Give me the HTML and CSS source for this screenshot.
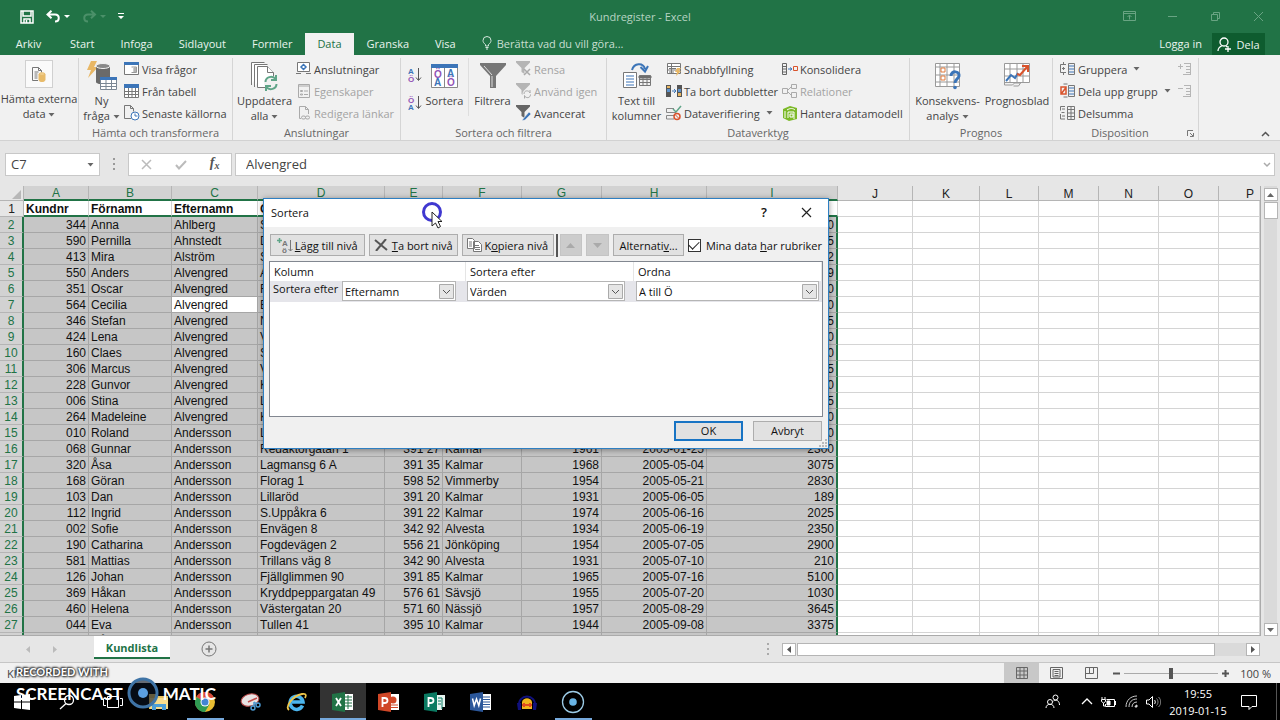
FILE: index.html
```html
<!DOCTYPE html>
<html lang="sv">
<head>
<meta charset="utf-8">
<title>Kundregister - Excel</title>
<link rel="stylesheet" href="styles.css">
</head>
<body>
<svg class="defs" width="0" height="0" aria-hidden="true">
  <symbol id="caret" viewBox="0 0 7 4"><path d="M0.5 0h6L3.500 3.500z" fill="#666"/></symbol>
  <symbol id="funnel" viewBox="0 0 16 16"><path d="M0 0h14v1.500L8.500 7v6L5.500 11V7L0 1.500z" fill="currentColor"/></symbol>
</svg>

<header class="top">
  <div class="titlebar">
    <div class="quick">
      <button aria-label="Spara"><svg width="14" height="14" viewBox="0 0 14 14" fill="none" stroke="#fff" stroke-width="1.500"><path d="M1 1h12v12H1zM3 1v5h8V1M4 13V9h6v4M6.500 10v3"/></svg></button>
      <button class="undo" aria-label="Ångra"><svg width="15" height="13" viewBox="0 0 15 13" fill="none" stroke="#fff" stroke-width="2"><path d="M1.500 4.500h7.500c5 0 5 7 0 7M5.500 .8L1.500 4.500l4 3.700"/></svg><svg width="6" height="4" viewBox="0 0 6 4"><path d="M0 0h6L3 3z" fill="#fff"/></svg></button>
      <button class="undo" aria-label="Gör om"><svg width="15" height="13" viewBox="0 0 15 13" fill="none" stroke="#4b9069" stroke-width="2"><path d="M13 4.500H6c-5 0-5 7 0 7M9 .8l4 3.700-4 3.700"/></svg><svg width="6" height="4" viewBox="0 0 6 4"><path d="M0 0h6L3 3z" fill="#4b9069"/></svg></button>
      <button aria-label="Anpassa verktygsfältet"><svg width="6" height="7" viewBox="0 0 6 7"><path d="M0 0h6v1H0zM0 3h6L3 6z" fill="#fff"/></svg></button>
    </div>
    <div class="doc-title">Kundregister - Excel</div>
    <div class="winctl">
      <button aria-label="Menyfliksalternativ"><svg width="13" height="11" viewBox="0 0 13 11" fill="none" stroke="#69a483"><path d="M.5.5h12v9H.5zM.5 2.500h12M6.500 8.500v-4M4.500 6l2-2 2 2"/></svg></button>
      <button aria-label="Minimera"><svg width="11" height="11" viewBox="0 0 11 11" stroke="#69a483"><path d="M1 5.500h9"/></svg></button>
      <button aria-label="Återställ"><svg width="11" height="11" viewBox="0 0 11 11" fill="none" stroke="#69a483"><path d="M1.500 3.500h6v6h-6zM3.500 3.500v-2h6v6h-2"/></svg></button>
      <button aria-label="Stäng"><svg width="11" height="11" viewBox="0 0 11 11" stroke="#69a483"><path d="M1 1l9 9M10 1l-9 9"/></svg></button>
    </div>
  </div>
  <nav class="tabs">
    <button class="file">Arkiv</button><button>Start</button><button>Infoga</button><button>Sidlayout</button><button>Formler</button><button class="active">Data</button><button>Granska</button><button>Visa</button>
    <button class="tell"><svg width="10" height="14" viewBox="0 0 10 14" fill="none" stroke="#d4e6dc"><path d="M3.500 10V8.500C2 7.500 1 6 1 4.500a4 4 0 018 0C9 6 8 7.500 6.500 8.500V10zM3.500 11.500h3M4 13h2"/></svg>Berätta vad du vill göra...</button>
    <span class="grow"></span>
    <button class="login">Logga in</button>
    <button class="share"><svg width="15" height="15" viewBox="0 0 15 15" fill="none" stroke="#fff" stroke-width="1.300"><circle cx="7" cy="5" r="4"/><path d="M1 14c0-3 2-4.500 4.500-5.500M9 9l1 1M11 9v6M8 12h6"/></svg>Dela</button>
  </nav>
</header>

<section class="ribbon">
  <div class="group g-ext">
    <div class="tools">
      <button class="big"><span class="pic boxed"><svg width="16" height="17" viewBox="0 0 16 17" fill="none" stroke="#777"><path d="M7 14.500H1.500V1.500h6L10.500 4.500v2M7.500 1.500v3h3M3.500 6h4M3.500 8h3M3.500 10h3M3.500 12h3"/><path d="M8 8v6c0 2 6 2 6 0V8" fill="#e8bb6a" stroke="#e8bb6a"/><ellipse cx="11" cy="8" rx="3" ry="1.200" fill="#f4d79c" stroke="#e8bb6a"/></svg></span>Hämta externa<span>data <svg class="car"><use href="#caret"/></svg></span></button>
    </div>
  </div>
  <div class="group g-trans">
    <div class="tools">
      <button class="big"><span class="pic"><svg width="32" height="32" viewBox="0 0 32 32"><path d="M5 1h6L8 7h4L2 18 5 10H1z" fill="#e8b765"/><path d="M10 6v16c0 3 14 3 14 0V6z" fill="#6a6a6a"/><ellipse cx="17" cy="6" rx="7" ry="2.500" fill="#888" stroke="#f1f1f1"/><path d="M14.500 17.500h16v12h-16z" fill="#fff" stroke="#7b8794"/><path d="M14 17h17v3H14z" fill="#3c75b8"/><path d="M14 23.500h17M14 26.500h17M20 20v10M25.500 20v10" stroke="#7b8794"/></svg></span>Ny<span>fråga <svg class="car"><use href="#caret"/></svg></span></button>
      <div class="col">
        <button class="small"><svg width="16" height="16" viewBox="0 0 16 16" fill="#fff" stroke="#777"><path d="M.5 1.500h14v12H.5z"/><path d="M0 1h15v3H0z" fill="#3c75b8" stroke="none"/><path d="M7.500 6h5v5.500h-5M9 8h3M9 10h3M11 6v6" stroke="#999"/></svg>Visa frågor</button>
        <button class="small"><svg width="16" height="16" viewBox="0 0 16 16" fill="#fff" stroke="#777"><path d="M.5 1.500h14v13H.5z"/><path d="M0 1h15v4H0z" fill="#3c75b8" stroke="none"/><path d="M.5 8.500h14M.5 11.500h14M4.500 5v9.500M8 5v9.500M11.500 5v9.500"/></svg>Från tabell</button>
        <button class="small"><svg width="16" height="16" viewBox="0 0 16 16" fill="none" stroke="#777"><path d="M7 13.500H.5V.5h6l3 3v3M6.500.5v3h3"/><circle cx="11" cy="11" r="4" fill="#fff" stroke="#3c75b8"/><path d="M11 8.500V11h2.500" stroke="#3c75b8"/></svg>Senaste källorna</button>
      </div>
    </div>
    <h2>Hämta och transformera</h2>
  </div>
  <div class="group g-conn">
    <div class="tools">
      <button class="big"><span class="pic"><svg width="30" height="30" viewBox="0 0 30 30" fill="#fff" stroke="#777"><path d="M1.500 24V1.500h13M4.500 26V3.500h13"/><path d="M7.500 5.500h10l6 6v15h-16z"/><path d="M17.500 5.500v6h6"/><circle cx="21" cy="22" r="7" fill="#f1f1f1" stroke="none"/><path d="M15.500 21c0-5 7-7 10-3M26.500 23c0 5-7 7-10 3M26 14v5h-5M16 30v-5h5" fill="none" stroke="#5fa588" stroke-width="2"/></svg></span>Uppdatera<span>alla <svg class="car"><use href="#caret"/></svg></span></button>
      <div class="col">
        <button class="small"><svg width="16" height="16" viewBox="0 0 16 16" fill="#fff" stroke="#777"><path d="M1.500 1.500h12v9h-12zM0 12.500h5M10 12.500h5"/><path d="M7.500 3.500L10 6l-2.500 2.500L5 6z" stroke="#3c75b8" stroke-width="1.500"/></svg>Anslutningar</button>
        <button class="small off"><svg width="16" height="16" viewBox="0 0 16 16" fill="none" stroke="#aaa"><path d="M2.500 1.500h11v13h-11zM2.500 3h11M4.500 7.500h2v1h-2zM8 8h4M4.500 11h2v1h-2zM8 11.500h4"/></svg>Egenskaper</button>
        <button class="small off"><svg width="16" height="16" viewBox="0 0 16 16" fill="none" stroke="#aaa"><path d="M5 13.500H3.500V1.500h6l3 3V9M9.500 1.500v3h3"/><rect x="5.500" y="11" width="4" height="3" rx="1.500"/><rect x="9.500" y="11" width="4" height="3" rx="1.500"/></svg>Redigera länkar</button>
      </div>
    </div>
    <h2>Anslutningar</h2>
  </div>
  <div class="group g-sort">
    <div class="tools">
      <div class="az">
        <button aria-label="Sortera stigande"><svg width="14" height="16" viewBox="0 0 14 16"><text x="0" y="7" class="gl blue">A</text><text x="0" y="15" class="gl purple">Ö</text><path d="M10.500 1v12M8 10.500l2.500 3 2.500-3" fill="none" stroke="#555"/></svg></button>
        <button aria-label="Sortera fallande"><svg width="14" height="16" viewBox="0 0 14 16"><text x="0" y="8" class="gl purple">Ö</text><text x="0" y="15" class="gl blue">A</text><path d="M10.500 1v12M8 10.500l2.500 3 2.500-3" fill="none" stroke="#555"/></svg></button>
      </div>
      <button class="big"><span class="pic"><svg width="28" height="26" viewBox="0 0 28 26"><path d="M.5 1.500h26v23H.5z" fill="#fff" stroke="#888"/><path d="M0 1h27v4H0z" fill="#3c75b8"/><path d="M13.500 5v19" stroke="#888"/><text x="3" y="15" class="gm purple">Ö</text><text x="3" y="23" class="gm blue">A</text><text x="16" y="14" class="gm blue">A</text><text x="16" y="23" class="gm purple">Ö</text></svg></span>Sortera</button>
      <span class="vr"></span>
      <button class="big"><span class="pic"><svg width="28" height="28" viewBox="0 0 28 28"><path d="M1 1h26v2L17 14v12h-6V14L1 3z" fill="#777"/><path d="M13 14v11M5 4l8 9" stroke="#ddd" fill="none"/></svg></span>Filtrera</button>
      <div class="col">
        <button class="small off"><svg width="16" height="16" viewBox="0 0 16 16" color="#b5b5b5"><use href="#funnel"/><path d="M8 8l6 6M14 8l-6 6" stroke="#aaa" stroke-width="1.500"/></svg>Rensa</button>
        <button class="small off"><svg width="16" height="16" viewBox="0 0 16 16" color="#b5b5b5"><use href="#funnel"/><circle cx="11" cy="11" r="4.500" fill="#f1f1f1"/><path d="M8 11c0-4 5-4 6-1V7M14.500 11.500c0 4-5 4-6 1v3" fill="none" stroke="#aaa"/></svg>Använd igen</button>
        <button class="small"><svg width="16" height="16" viewBox="0 0 16 16" color="#666"><use href="#funnel"/><path d="M7 14l6-7 2 2-6 6-3 .5z" fill="#3c75b8" stroke="#f1f1f1" stroke-width=".5"/></svg>Avancerat</button>
      </div>
    </div>
    <h2>Sortera och filtrera</h2>
  </div>
  <div class="group g-data">
    <div class="tools">
      <button class="big"><span class="pic"><svg width="30" height="27" viewBox="0 0 30 27" fill="none" stroke="#777"><path d="M1.500 10.500h13v15h-13z" fill="#fff"/><path d="M4 14h8M4 17h8M4 20h8M4 23h8" stroke="#3c75b8"/><path d="M17.500 13.500h11v10h-11zM17 17.500h12M17 20.500h12M21 16v8M25 16v8"/><path d="M17 14h12v2H17z" fill="#666"/><path d="M10 8c2-7 11-8 13-1M18.500 5l4.500 4.500L26 4" stroke="#3c75b8" stroke-width="2"/></svg></span>Text till<span>kolumner</span></button>
      <div class="col first">
        <button class="small"><svg width="16" height="16" viewBox="0 0 16 16" fill="#fff" stroke="#777"><path d="M1.500 2.500h13v10h-13zM2 5.500h12M2 9h12M5.500 3v9M3 7.500h7M3 11h5"/><path d="M11 7h4l-2 3h2l-5 5 1-4H9z" fill="#e8b765" stroke="none"/></svg>Snabbfyllning</button>
        <button class="small"><svg width="16" height="16" viewBox="0 0 16 16"><path d="M0 2h5v12H0zM11 2h5v12h-5z" fill="#555"/><path d="M1 6h3v3H1zM12 6h3v3h-3z" fill="#5d93cc"/><path d="M1 3h3v2H1zM12 10h3v3h-3z" fill="#e8b765"/><path d="M6 8h4M8 6l2 2-2 2" stroke="#3c75b8" fill="none"/></svg>Ta bort dubbletter</button>
        <button class="small"><svg width="16" height="16" viewBox="0 0 16 16" fill="none" stroke="#888"><path d="M8 3.500H.5v4H10M8 10.500H.5v3.500H8"/><path d="M7 4l3 3 5-6" stroke="#5fa588" stroke-width="1.500"/><circle cx="11" cy="11.500" r="3" stroke="#d9532c" stroke-width="1.500"/><path d="M9 9.500l4 4" stroke="#d9532c"/></svg>Dataverifiering<svg class="car end"><use href="#caret"/></svg></button>
      </div>
      <div class="col">
        <button class="small"><svg width="16" height="16" viewBox="0 0 16 16" fill="none" stroke="#666"><path d="M.5 2.500h4v11h-4zM.5 5.500h4M.5 8h4M.5 11h4"/><path d="M6 8h4M8 6.500L10 8 8 9.500" stroke="#3c75b8"/><path d="M11.500 5.500h4v4h-4z" stroke="#d9532c"/></svg>Konsolidera</button>
        <button class="small off"><svg width="16" height="16" viewBox="0 0 16 16" fill="none" stroke="#aaa"><path d="M.5 5.500h5v5h-5zM9.500 1.500h5v4h-5zM9.500 9.500h5v5h-5zM6 7l3-3M6 9l3 3"/></svg>Relationer</button>
        <button class="small"><svg width="16" height="16" viewBox="0 0 16 16"><path d="M1 4l7-3 7 2v11l-8 2-6-3z" fill="#7cb928"/><path d="M3 6v7M5 5c3-2 6-2 8 0M6 7h6v7M6 7v6M8 9h3v3H8z" stroke="#fff" fill="none"/></svg>Hantera datamodell</button>
      </div>
    </div>
    <h2>Dataverktyg</h2>
  </div>
  <div class="group g-prog">
    <div class="tools">
      <button class="big"><span class="pic"><svg width="28" height="28" viewBox="0 0 28 28" fill="none" stroke="#999"><path d="M1.500 1.500h24v23h-24z" fill="#fff"/><path d="M1 5h24M1 13h24M1 20h24M6 1v23M13 1v23M20 1v23"/><path d="M7 6h4v4H7zM7 14h4v4H7z" fill="#fff" stroke="#e07a3c"/><path d="M17 14c0-6 9-5 8 0-.5 3-4 3-4 7" stroke="#3c75b8" stroke-width="3"/><circle cx="21" cy="25.500" r="1.800" fill="#3c75b8" stroke="none"/></svg></span>Konsekvens-<span>analys <svg class="car"><use href="#caret"/></svg></span></button>
      <button class="big"><span class="pic"><svg width="28" height="28" viewBox="0 0 28 28" fill="none" stroke="#999"><path d="M1.500 1.500h25v19h-25z" fill="#fff"/><path d="M1 7h25M1 14h25M7 1v19M14 1v19M20 1v19M1.500 20v3h8l2-2h6l-2 3h-5"/><path d="M3 19l5-6 4 3 3-5" stroke="#3c75b8" stroke-width="2"/><path d="M14 12l3 1 7-8M19 4h6v6" stroke="#d9532c" stroke-width="2"/></svg></span>Prognosblad</button>
    </div>
    <h2>Prognos</h2>
  </div>
  <div class="group g-disp">
    <div class="tools">
      <div class="col">
        <button class="small"><svg width="16" height="16" viewBox="0 0 16 16" fill="none" stroke="#777"><path d="M6 3.500H.5v8H6M3.500 1v2M3.500 12v2M2 7.500h3M3.500 6v3M8.500 2.500h6v11h-6z"/><path d="M9 5h5M9 8h5M9 11h5" stroke="#3c75b8"/></svg>Gruppera<svg class="car end"><use href="#caret"/></svg></button>
        <button class="small"><svg width="16" height="16" viewBox="0 0 16 16" fill="none" stroke="#777"><path d="M8.500 2.500h6v11h-6zM3.500 1h4M3.500 14h4"/><path d="M9 5h5M9 8h5M9 11h5" stroke="#3c75b8"/><path d="M1 4h5v7H1zM1.500 10.500L6 4.500" stroke="#d9532c" stroke-width="1.500"/></svg>Dela upp grupp<svg class="car end"><use href="#caret"/></svg></button>
        <button class="small"><svg width="16" height="16" viewBox="0 0 16 16" fill="none" stroke="#777"><path d="M5 1.500H.5v4M.5 9v5H5M1.500 7.500h3M2 4h3M2 11h3M7.500 1.500h7v13h-7zM7.500 4.500h7M7.500 8h7M7.500 11.500h7M11 1.500v13"/></svg>Delsumma</button>
      </div>
      <div class="col mini">
        <button class="small" aria-label="Visa detalj"><svg width="14" height="14" viewBox="0 0 14 14" stroke="#b5b5b5"><path d="M0 4.500h5M2.500 2v5M6 1.500h7M8 4.500h5M8 7.500h5M8 10.500h5M5 12.500h8M12.500 1v12"/></svg></button>
        <button class="small" aria-label="Dölj detalj"><svg width="14" height="14" viewBox="0 0 14 14" stroke="#b5b5b5"><path d="M0 4.500h5M6 1.500h7M8 4.500h5M8 7.500h5M8 10.500h5M5 12.500h8M12.500 1v12"/></svg></button>
      </div>
    </div>
    <h2>Disposition<svg class="launch" width="7" height="7" viewBox="0 0 7 7" fill="none" stroke="#777"><path d="M.5 6V.5H6M3 3l3 3M6.500 3v3.500H3"/></svg></h2>
  </div>
  <button class="collapse" aria-label="Dölj menyfliksområdet"><svg width="9" height="6" viewBox="0 0 9 6" fill="none" stroke="#555" stroke-width="1.500"><path d="M1 5l3.500-3.500L8 5"/></svg></button>
</section>

<section class="formula">
  <div class="namebox"><input aria-label="Namnruta" value="C7"><button aria-label="Välj namn"><svg class="car"><use href="#caret"/></svg></button></div>
  <svg class="dots" width="2" height="12" viewBox="0 0 2 12" fill="#999"><path d="M0 0h2v2H0zM0 5h2v2H0zM0 10h2v2H0z"/></svg>
  <div class="fx">
    <button aria-label="Avbryt redigering"><svg width="11" height="11" viewBox="0 0 11 11" stroke="#bbb" stroke-width="1.500"><path d="M1 1l9 9M10 1l-9 9"/></svg></button>
    <button aria-label="Ange"><svg width="12" height="10" viewBox="0 0 12 10" fill="none" stroke="#bbb" stroke-width="2"><path d="M1 5l3 3.500L11 1"/></svg></button>
    <button class="fn" aria-label="Infoga funktion">f<sub>x</sub></button>
  </div>
  <div class="fbox"><input aria-label="Formelfält" value="Alvengred"><button aria-label="Expandera"><svg width="8" height="6" viewBox="0 0 8 6" fill="none" stroke="#aaa" stroke-width="1.500"><path d="M1 1l3 3 3-3"/></svg></button></div>
</section>

<main class="sheet">
  <div class="gridwrap">
  <table class="grid">
    <colgroup><col class="c-rh"><col class="c-a"><col class="c-b"><col class="c-c"><col class="c-d"><col class="c-e"><col class="c-f"><col class="c-g"><col class="c-h"><col class="c-i"><col class="c-j"><col class="c-k"><col class="c-l"><col class="c-m"><col class="c-m"><col class="c-m"><col></colgroup>
    <thead><tr><th class="corner"><svg width="9" height="9" viewBox="0 0 9 9"><path d="M9 0v9H0z" fill="#b7b7b7"/></svg></th><th class="on">A<th class="on">B<th class="on">C<th class="on">D<th class="on">E<th class="on">F<th class="on">G<th class="on">H<th class="on">I<th>J<th>K<th>L<th>M<th>N<th>O<th class="last">P</tr></thead>
    <tbody>
    <tr class="head"><th>1<td>Kundnr<td>Förnamn<td>Efternamn<td>G<td><td><td><td><td><td><td><td><td><td><td><td></tr>
    </tbody>
    <tbody class="sel">
    <tr><th>2<td>344<td>Anna<td>Ahlberg<td>S<td><td><td><td><td>0<td><td><td><td><td><td><td></tr>
    <tr><th>3<td>590<td>Pernilla<td>Ahnstedt<td>D<td><td><td><td><td>5<td><td><td><td><td><td><td></tr>
    <tr><th>4<td>413<td>Mira<td>Alström<td>S<td><td><td><td><td>2<td><td><td><td><td><td><td></tr>
    <tr><th>5<td>550<td>Anders<td>Alvengred<td>A<td><td><td><td><td>9<td><td><td><td><td><td><td></tr>
    <tr><th>6<td>351<td>Oscar<td>Alvengred<td>F<td><td><td><td><td>0<td><td><td><td><td><td><td></tr>
    <tr><th>7<td>564<td>Cecilia<td class="current">Alvengred<td>E<td><td><td><td><td>0<td><td><td><td><td><td><td></tr>
    <tr><th>8<td>346<td>Stefan<td>Alvengred<td>N<td><td><td><td><td>5<td><td><td><td><td><td><td></tr>
    <tr><th>9<td>424<td>Lena<td>Alvengred<td>V<td><td><td><td><td>0<td><td><td><td><td><td><td></tr>
    <tr><th>10<td>160<td>Claes<td>Alvengred<td>S<td><td><td><td><td>0<td><td><td><td><td><td><td></tr>
    <tr><th>11<td>306<td>Marcus<td>Alvengred<td>V<td><td><td><td><td>5<td><td><td><td><td><td><td></tr>
    <tr><th>12<td>228<td>Gunvor<td>Alvengred<td>K<td><td><td><td><td>0<td><td><td><td><td><td><td></tr>
    <tr><th>13<td>006<td>Stina<td>Alvengred<td>L<td><td><td><td><td>5<td><td><td><td><td><td><td></tr>
    <tr><th>14<td>264<td>Madeleine<td>Alvengred<td>K<td><td><td><td><td>0<td><td><td><td><td><td><td></tr>
    <tr><th>15<td>010<td>Roland<td>Andersson<td>L<td><td><td><td><td>0<td><td><td><td><td><td><td></tr>
    <tr><th>16<td>068<td>Gunnar<td>Andersson<td>Redaktörgatan 1<td>391 27<td>Kalmar<td>1961<td>2005-01-25<td>2300<td><td><td><td><td><td><td></tr>
    <tr><th>17<td>320<td>Åsa<td>Andersson<td>Lagmansg 6 A<td>391 35<td>Kalmar<td>1968<td>2005-05-04<td>3075<td><td><td><td><td><td><td></tr>
    <tr><th>18<td>168<td>Göran<td>Andersson<td>Florag 1<td>598 52<td>Vimmerby<td>1954<td>2005-05-21<td>2830<td><td><td><td><td><td><td></tr>
    <tr><th>19<td>103<td>Dan<td>Andersson<td>Lillaröd<td>391 20<td>Kalmar<td>1931<td>2005-06-05<td>189<td><td><td><td><td><td><td></tr>
    <tr><th>20<td>112<td>Ingrid<td>Andersson<td>S.Uppåkra 6<td>391 22<td>Kalmar<td>1974<td>2005-06-16<td>2025<td><td><td><td><td><td><td></tr>
    <tr><th>21<td>002<td>Sofie<td>Andersson<td>Envägen 8<td>342 92<td>Alvesta<td>1934<td>2005-06-19<td>2350<td><td><td><td><td><td><td></tr>
    <tr><th>22<td>190<td>Catharina<td>Andersson<td>Fogdevägen 2<td>556 21<td>Jönköping<td>1954<td>2005-07-05<td>2900<td><td><td><td><td><td><td></tr>
    <tr><th>23<td>581<td>Mattias<td>Andersson<td>Trillans väg 8<td>342 90<td>Alvesta<td>1931<td>2005-07-10<td>210<td><td><td><td><td><td><td></tr>
    <tr><th>24<td>126<td>Johan<td>Andersson<td>Fjällglimmen 90<td>391 85<td>Kalmar<td>1965<td>2005-07-16<td>5100<td><td><td><td><td><td><td></tr>
    <tr><th>25<td>369<td>Håkan<td>Andersson<td>Kryddpeppargatan 49<td>576 61<td>Sävsjö<td>1955<td>2005-07-20<td>1030<td><td><td><td><td><td><td></tr>
    <tr><th>26<td>460<td>Helena<td>Andersson<td>Västergatan 20<td>571 60<td>Nässjö<td>1957<td>2005-08-29<td>3645<td><td><td><td><td><td><td></tr>
    <tr><th>27<td>044<td>Eva<td>Andersson<td>Tullen 41<td>395 10<td>Kalmar<td>1944<td>2005-09-08<td>3375<td><td><td><td><td><td><td></tr>
    <tr><th>28<td>443<td>Håkan<td>Andersson<td>Fredsg 6<td>362 30<td>Kalmar<td>1961<td>2005-11-26<td>1360<td><td><td><td><td><td><td></tr>
    </tbody>
  </table>
  </div>
  <div class="vscroll">
    <button aria-label="Uppåt"><svg width="7" height="4" viewBox="0 0 7 4"><path d="M0 4L3.500 0 7 4z" fill="#666"/></svg></button>
    <div class="vthumb"></div>
    <span class="grow"></span>
    <button aria-label="Nedåt"><svg width="7" height="4" viewBox="0 0 7 4"><path d="M0 0h7L3.500 4z" fill="#666"/></svg></button>
  </div>
</main>

<section class="sheettabs">
  <button class="nav" aria-label="Föregående blad"><svg width="4" height="7" viewBox="0 0 4 7"><path d="M4 0v7L0 3.500z" fill="#bbb"/></svg></button>
  <button class="nav" aria-label="Nästa blad"><svg width="4" height="7" viewBox="0 0 4 7"><path d="M0 0v7l4-3.500z" fill="#bbb"/></svg></button>
  <button class="stab">Kundlista</button>
  <button class="add" aria-label="Nytt blad"><svg width="16" height="16" viewBox="0 0 16 16" fill="none" stroke="#777"><circle cx="8" cy="8" r="7"/><path d="M8 4.500v7M4.500 8h7" stroke-width="1.500"/></svg></button>
  <span class="grow"></span>
  <svg class="dots" width="2" height="12" viewBox="0 0 2 12" fill="#aaa"><path d="M0 0h2v2H0zM0 5h2v2H0zM0 10h2v2H0z"/></svg>
  <div class="hscroll">
    <button aria-label="Vänster"><svg width="4" height="7" viewBox="0 0 4 7"><path d="M4 0v7L0 3.500z" fill="#555"/></svg></button>
    <div class="hthumb"></div>
    <div class="htrack"></div>
    <button aria-label="Höger"><svg width="4" height="7" viewBox="0 0 4 7"><path d="M0 0v7l4-3.500z" fill="#555"/></svg></button>
  </div>
</section>

<footer class="status">
  <span class="ready">Kl</span>
  <span class="grow"></span>
  <button class="view on" aria-label="Normal"><svg width="12" height="12" viewBox="0 0 12 12" fill="none" stroke="#666"><path d="M.5.5h11v11H.5zM4 .5v11M8 .5v11M.5 4h11M.5 8h11"/></svg></button>
  <button class="view" aria-label="Sidlayout"><svg width="13" height="12" viewBox="0 0 13 12" fill="none" stroke="#666"><path d="M.5.500h12v11H.5zM3 2.500h7v7.500H3zM4.500 4.500h4M4.500 6.500h4M4.500 8.500h4"/></svg></button>
  <button class="view" aria-label="Sidbrytning"><svg width="13" height="12" viewBox="0 0 13 12" fill="none" stroke="#666"><path d="M.5.500h12v11H.5zM4.500.5V6M.5 6.500h8V.5"/></svg></button>
  <button class="zoom" aria-label="Zooma ut"><svg width="7" height="7" viewBox="0 0 7 7" stroke="#555" stroke-width="2"><path d="M0 3.500h7"/></svg></button>
  <input class="range" type="range" aria-label="Zoom" min="0" max="100" value="50">
  <button class="zoom" aria-label="Zooma in"><svg width="7" height="7" viewBox="0 0 7 7" stroke="#555" stroke-width="2"><path d="M0 3.500h7M3.500 0v7"/></svg></button>
  <span class="pct">100 %</span>
</footer>

<div class="taskbar">
  <button class="task" aria-label="Start"><svg width="16" height="16" viewBox="0 0 16 16" fill="#fff"><path d="M0 2l7-1v6.500H0zM8 1l8-1v7.500H8zM0 8.500h7V15l-7-1zM8 8.500h8V16l-8-1z"/></svg></button>
  <button class="task" aria-label="Sök"><svg width="16" height="16" viewBox="0 0 16 16" fill="none" stroke="#fff" stroke-width="1.300"><circle cx="10" cy="6" r="4.500"/><path d="M7 9.500L1 15"/></svg></button>
  <button class="task" aria-label="Aktivitetsvy"><svg width="20" height="14" viewBox="0 0 20 14" fill="none" stroke="#fff"><path d="M4.500 1.500h11v11h-11zM3 3.500H.5v7H3M17 3.500h2.500v7H17"/></svg></button>
  <button class="task" aria-label="Utforskaren"><svg width="20" height="18" viewBox="0 0 20 18"><path d="M0 1h7l2 2h10v13H0z" fill="#e9c45f"/><path d="M1 5h18v11H1z" fill="#f8dd8c"/><path d="M3 17v-6h14v6h-4v-3H7v3z" fill="#4d9fd6"/></svg></button>
  <button class="task open" aria-label="Chrome"><svg width="20" height="20" viewBox="0 0 20 20"><circle cx="10" cy="10" r="10" fill="#e8bd32"/><path d="M10 10L1.300 5A10 10 0 0118.700 5z" fill="#d94a3d"/><path d="M10 10L1.300 5A10 10 0 0010 20l4.300-7.500z" fill="#2f9b53"/><circle cx="10" cy="10" r="4.500" fill="#fff"/><circle cx="10" cy="10" r="3.500" fill="#4285d4"/></svg></button>
  <button class="task" aria-label="Skärmklipp"><svg width="22" height="20" viewBox="0 0 22 20" fill="none"><ellipse cx="10" cy="8" rx="9" ry="6" fill="#e8e3e3" stroke="#b84848" transform="rotate(-15 10 8)"/><path d="M8 10l9-4" stroke="#c24b4b" stroke-width="1.500"/><circle cx="13" cy="16" r="2" stroke="#4c9bd4" stroke-width="1.500"/><circle cx="18" cy="13" r="2" stroke="#4c9bd4" stroke-width="1.500"/><path d="M14 10v4M14 10l3 2" stroke="#4c9bd4" stroke-width="1.500"/></svg></button>
  <button class="task" aria-label="Internet Explorer"><svg width="22" height="20" viewBox="0 0 22 20" fill="none"><path d="M16.500 13.500A6.500 6.500 0 1117 10H6" stroke="#4bb5ee" stroke-width="3.500"/><path d="M3 18C-1 15 6 4 16 2c5-1 4 2 3 4" stroke="#edc64b" stroke-width="1.800"/></svg></button>
  <button class="task open current" aria-label="Excel"><svg width="22" height="20" viewBox="0 0 22 20"><path d="M11 2h10v16H11z" fill="#fff"/><path d="M12 5h8M12 8h8M12 11h8M12 14h8M16 3v14" stroke="#217346"/><path d="M0 2l13-2v20L0 18z" fill="#217346"/><path d="M4 6l5 8M9 6l-5 8" stroke="#fff" stroke-width="1.800"/></svg></button>
  <button class="task" aria-label="PowerPoint"><svg width="22" height="20" viewBox="0 0 22 20"><path d="M11 2h10v16H11z" fill="#fff"/><circle cx="15" cy="8" r="3.500" fill="#d04727"/><path d="M13 13h7M13 15.500h7" stroke="#d04727"/><path d="M0 2l13-2v20L0 18z" fill="#d04727"/><path d="M4.500 15V6h2c4 0 4 5 0 5h-2" fill="none" stroke="#fff" stroke-width="1.800"/></svg></button>
  <button class="task" aria-label="Publisher"><svg width="22" height="20" viewBox="0 0 22 20"><path d="M13 3h8v12h-3v3h-7z" fill="#e8f5f1"/><path d="M14 6h4v11M14 9h3M14 12h3" stroke="#0b7a62" fill="none"/><path d="M0 2l13-2v20L0 18z" fill="#0b7a62"/><path d="M4.500 15V6h2c4 0 4 5 0 5h-2" fill="none" stroke="#fff" stroke-width="1.800"/></svg></button>
  <button class="task" aria-label="Word"><svg width="22" height="20" viewBox="0 0 22 20"><path d="M11 2h10v16H11z" fill="#fff"/><path d="M13 5h7M13 7.500h7M13 10h7M13 12.500h7M13 15h7" stroke="#2b579a"/><path d="M0 2l13-2v20L0 18z" fill="#2b579a"/><path d="M2.500 6.500l1.700 7L6.500 7l2.300 6.500 1.700-7" fill="none" stroke="#fff" stroke-width="1.500"/></svg></button>
  <button class="task" aria-label="Audacity"><svg width="20" height="18" viewBox="0 0 20 18" fill="none"><path d="M2 14C0 0 20 0 18 14" stroke="#10107c" stroke-width="2"/><path d="M0 10h4v7H1zM16 10h4l-1 7h-3z" fill="#10107c"/><path d="M5 16V9c1-5 9-5 10 0v7z" fill="#f0b51d"/><path d="M5 12h10M7 10v4M13 10v4" stroke="#e04b20" stroke-width="2"/></svg></button>
  <button class="task open" aria-label="Screencast"><svg width="24" height="24" viewBox="0 0 24 24" fill="none"><circle cx="12" cy="12" r="10.500" stroke="#9ccbe6" stroke-width="1.300"/><circle cx="12" cy="12" r="3.800" fill="#69b4e4"/></svg></button>
  <span class="grow"></span>
  <div class="tray">
    <button aria-label="Kontakter"><svg width="15" height="15" viewBox="0 0 15 15" fill="none" stroke="#fff"><circle cx="10.500" cy="3.500" r="2.500"/><circle cx="5" cy="8" r="2.500"/><path d="M1 14c0-5 8-5 8 0M8.500 7c3-2 6 0 6 4"/></svg></button>
    <button aria-label="Visa dolda ikoner"><svg width="12" height="7" viewBox="0 0 12 7" fill="none" stroke="#fff" stroke-width="1.300"><path d="M1 6l5-5 5 5"/></svg></button>
    <button aria-label="Batteri"><svg width="16" height="12" viewBox="0 0 16 12" fill="none" stroke="#fff"><path d="M5.500 3.500h8v7h-9V8M14.500 5v4M1 1v2M4 1v2M.5 3.500h4v2l-2 1.500-2-1.500zM2.500 7v3H4"/><path d="M6 5h3v4H6z" fill="#fff"/></svg></button>
    <button aria-label="Nätverk"><svg width="13" height="13" viewBox="0 0 13 13" fill="none" stroke="#ccc"><path d="M1 12C1 5 6 1 12 1M4 12c0-5 3-8 8-8M7 12c0-3 2-5 5-5"/><path d="M10 12c0-1 1-2 2-2v2z" fill="#fff"/></svg></button>
    <button aria-label="Volym"><svg width="15" height="12" viewBox="0 0 15 12" fill="none" stroke="#fff"><path d="M.5 4H3l3.500-3.500v11L3 8H.5zM8.500 4c1 1 1 3 0 4"/><path d="M10.500 2.500c2 2 2 5 0 7M12.500 1c3 3 3 7 0 10" stroke="#888"/></svg></button>
  </div>
  <div class="clock"><span>19:55</span><span>2019-01-15</span></div>
  <button class="notif" aria-label="Meddelanden"><svg width="16" height="16" viewBox="0 0 16 16" fill="none" stroke="#fff"><path d="M.5 1.500h15v11H11l-3 3v-3H.5z"/></svg></button>
</div>

<div class="dialog" role="dialog" aria-labelledby="dlg">
  <div class="dlg-title"><span id="dlg">Sortera</span><span class="grow"></span><button class="help" aria-label="Hjälp">?</button><button aria-label="Stäng dialogruta"><svg width="11" height="11" viewBox="0 0 11 11" stroke="#222" stroke-width="1.200"><path d="M1 1l9 9M10 1l-9 9"/></svg></button></div>
  <div class="dlg-tools">
    <button class="btn w-add"><svg width="16" height="16" viewBox="0 0 16 16" fill="none"><path d="M0 3.500h5M2.500 1v5" stroke="#5fa588" stroke-width="1.500"/><text x="5" y="9" class="gl gray">A</text><text x="5" y="16" class="gl gray">ö</text><path d="M13.500 3v11M11.500 12l2 2 2-2" stroke="#777"/></svg><span><u>L</u>ägg till nivå</span></button>
    <button class="btn w-del"><svg width="14" height="12" viewBox="0 0 14 12" stroke="#555" stroke-width="2"><path d="M1 1l12 10M12 0L2 12"/></svg><span><u>T</u>a bort nivå</span></button>
    <button class="btn w-copy"><svg width="15" height="14" viewBox="0 0 15 14" fill="#fff" stroke="#777"><path d="M.5.5h5l2 2v8h-7zM2 4h3M2 6h3M2 8h3M6.500 3.500h5l3 3v7h-8zM8 7.500h4M8 9.500h5M8 11.500h5"/></svg><span>K<u>o</u>piera nivå</span></button>
    <span class="bar"></span>
    <button class="btn arrow" disabled aria-label="Flytta upp"><svg width="9" height="5" viewBox="0 0 9 5"><path d="M0 5l4.500-5L9 5z" fill="#aaa"/></svg></button>
    <button class="btn arrow" disabled aria-label="Flytta ned"><svg width="9" height="5" viewBox="0 0 9 5"><path d="M0 0h9L4.500 5z" fill="#aaa"/></svg></button>
    <button class="btn w-alt"><span>Alternati<u>v</u>...</span></button>
    <label class="check"><input type="checkbox" checked><span>Mina data <u>h</u>ar rubriker</span></label>
  </div>
  <div class="levels">
    <div class="lv head"><span>Kolumn</span><span>Sortera efter</span><span>Ordna</span></div>
    <div class="lv row">
      <label for="col">Sortera efter</label>
      <span class="pick"><select id="col"><option>Efternamn</option></select><svg viewBox="0 0 15 15"><path d="M.5.5h14v14H.5z" fill="#e6e6e6" stroke="#aaa"/><path d="M4 6l3.500 3.500L11 6" fill="none" stroke="#555"/></svg></span>
      <span class="pick"><select aria-label="Sortera efter"><option>Värden</option></select><svg viewBox="0 0 15 15"><path d="M.5.5h14v14H.5z" fill="#e6e6e6" stroke="#aaa"/><path d="M4 6l3.500 3.500L11 6" fill="none" stroke="#555"/></svg></span>
      <span class="pick"><select aria-label="Ordna"><option>A till Ö</option></select><svg viewBox="0 0 15 15"><path d="M.5.5h14v14H.5z" fill="#e6e6e6" stroke="#aaa"/><path d="M4 6l3.500 3.500L11 6" fill="none" stroke="#555"/></svg></span>
    </div>
  </div>
  <div class="dlg-foot"><button class="btn ok">OK</button><button class="btn">Avbryt</button></div>
  <svg class="grip" width="8" height="8" viewBox="0 0 8 8" fill="#bbb"><path d="M6 0h2v2H6zM6 3h2v2H6zM6 6h2v2H6zM3 3h2v2H3zM3 6h2v2H3zM0 6h2v2H0z"/></svg>
</div>

<svg class="pointer" width="24" height="28" viewBox="0 0 24 28"><circle cx="11" cy="11" r="8.500" fill="none" stroke="#4038d0" stroke-width="3"/><path d="M11 11v14l3.500-3 2.500 5 2.500-1.500-2.500-5h4z" fill="#fff" stroke="#222"/></svg>

<div class="mark">
  <div class="mark-a">RECORDED WITH</div>
  <div class="mark-b"><span>SCREENCAST</span><svg width="34" height="34" viewBox="0 0 34 34"><circle cx="17" cy="17" r="14" fill="rgba(10,20,35,.6)" stroke="#3f74a6" stroke-width="3"/><circle cx="17" cy="17" r="5" fill="#5b9fe0"/></svg><span>MATIC</span></div>
</div>
</body>
</html>
```

FILE: styles.css
```css
* { box-sizing: border-box; }
html, body { height: 100%; }
body {
  margin: 0; display: flex; flex-direction: column; overflow: hidden; position: relative;
  font: 11px/15px "Open Sans", "Noto Sans", sans-serif; color: #444; background: #e6e6e6;
}
button { font: inherit; color: inherit; background: none; border: 0; padding: 0; margin: 0; white-space: nowrap; }
input, select { font: inherit; color: inherit; }
svg { display: block; flex: none; }
.defs { position: absolute; }
.grow { flex: 1; }
.car { width: 7px; height: 4px; display: inline-block; vertical-align: middle; }

/* Title bar and tabs */
.top { background: #217346; color: #fff; }
.titlebar { height: 33px; display: grid; grid-template-columns: 1fr auto 1fr; align-items: center; }
.quick { display: flex; align-items: center; gap: 12px; padding-left: 20px; height: 28px; }
.quick button { display: flex; align-items: center; gap: 3px; }
.doc-title { color: #b7d4c3; }
.winctl { display: flex; justify-content: flex-end; height: 28px; }
.winctl button { width: 43px; display: flex; align-items: center; justify-content: center; }
.tabs { display: flex; height: 22px; align-items: stretch; color: #eaf4ee; }
.tabs button { padding: 0 13px 2px; }
.tabs .file { width: 57px; padding: 0 0 2px; }
.tabs .active { background: #f1f1f1; color: #217346; padding: 0 12px 2px; }
.tabs .tell { display: flex; align-items: center; gap: 5px; color: #c9dfd2; }
.tabs .login { padding: 0 10px 2px; }
.tabs .share { background: #0e5c2f; width: 53px; margin-right: 15px; padding: 0; display: flex; align-items: center; justify-content: center; gap: 4px; }

/* Ribbon */
.ribbon { display: flex; height: 86px; padding: 3px 0 0; background: #f1f1f1; border-bottom: 1px solid #d2d2d2; }
.group { border-right: 1px solid #d5d5d5; display: flex; flex-direction: column; justify-content: space-between; }
.tools { display: flex; height: 66px; }
.group h2 { margin: 0; font-size: 11px; font-weight: 400; line-height: 14px; text-align: center; color: #666; position: relative; }
.launch { position: absolute; right: 4px; top: 4px; }
.big { display: flex; flex-direction: column; align-items: center; }
.pic { height: 35px; display: flex; align-items: center; justify-content: center; }
.boxed { height: 28px; width: 28px; margin: 2px 0 3px; background: #fafafa; border: 1px solid #d0d0d0; }
.col { display: flex; flex-direction: column; }
.small { display: flex; align-items: center; gap: 2px; height: 22px; }
.small .end { margin-left: 4px; }
.off { color: #a3a3a3; }
.g-ext { width: 79px; }
.g-ext .big { width: 78px; }
.g-trans { width: 154px; }
.g-trans .big { width: 45px; }
.g-conn { width: 168px; }
.g-conn .big { width: 63px; }
.g-sort { width: 206px; }
.g-sort .big { width: 47px; }
.az { display: flex; flex-direction: column; gap: 12px; padding: 9px 0 0 7px; width: 20px; }
.vr { width: 1px; height: 58px; background: #dedede; }
.g-data { width: 303px; }
.g-data .big { width: 59px; }
.g-data .first { width: 116px; }
.g-prog { width: 143px; }
.g-prog .big { width: 75px; }
.g-prog .big + .big { width: 64px; }
.g-disp { width: 146px; padding-left: 7px; }
.g-disp .tools { justify-content: space-between; }
.g-disp h2 { padding-right: 18px; }
.mini { padding-right: 6px; }
.collapse { margin-left: auto; align-self: flex-end; padding: 0 10px 3px 0; }
.gl { font: bold 8px "Liberation Sans", sans-serif; }
.gm { font: bold 10px "Liberation Sans", sans-serif; }
.blue { fill: #3c75b8; }
.purple { fill: #9153b5; }
.gray { fill: #777; }

/* Formula bar */
.formula { display: flex; height: 45px; padding: 12px 5px 10px; font-size: 13px; }
.namebox, .fx, .fbox { display: flex; align-items: center; background: #fff; border: 1px solid #c8c8c8; }
.namebox { width: 95px; padding-right: 5px; }
.formula input { border: 0; outline: 0; background: none; min-width: 0; flex: 1; padding: 0 5px; }
.formula .fbox input { padding: 0 10px; }
.namebox button { display: flex; }
.dots { margin: 5px 13px; }
.fx { width: 104px; justify-content: space-around; }
.fn { font: italic bold 14px/16px "Liberation Serif", serif; color: #555; }
.fn sub { font-size: 10px; vertical-align: -2px; }
.fbox { flex: 1; margin-left: 3px; padding-right: 3px; }

/* Grid */
.sheet { display: flex; flex: 1; min-height: 0; }
.gridwrap { flex: 1; overflow: hidden; min-width: 0; background: #fff; border-bottom: 1px solid #ababab; }
.grid { table-layout: fixed; width: 100%; border-spacing: 0; font: 12px/14px "Liberation Sans", Arial, sans-serif; color: #111; }
.c-rh { width: 24px; } .c-a { width: 65px; } .c-b { width: 83px; } .c-c { width: 86px; } .c-d { width: 127px; }
.c-e { width: 58px; } .c-f { width: 79px; } .c-g { width: 80px; } .c-h { width: 105px; } .c-i { width: 131px; }
.c-j { width: 75px; } .c-k { width: 67px; } .c-l { width: 59px; } .c-m { width: 60px; }
.grid th, .grid td { height: 16px; padding: 0 2px; overflow: hidden; white-space: nowrap; border-right: 1px solid #d4d4d4; border-bottom: 1px solid #d4d4d4; }
.grid th { background: #e6e6e6; font-weight: 400; padding: 0; text-align: center; border-color: #b5b5b5; color: #222; }
.grid thead th { height: 15px; line-height: 12px; padding-top: 1px; }
.grid thead th.on { background: #d2d2d2; color: #217346; border-bottom: 2px solid #217346; }
.grid thead th.last { text-align: right; padding-right: 6px; border-right: 0; }
.grid .corner svg { margin: 1px 2px 0 auto; }
.grid .head td { font-weight: 700; }
.grid .head td:nth-child(-n+10) { border-bottom: 2px solid #217346; line-height: 12px; padding-top: 1px; }
.sel th { background: #d2d2d2; color: #217346; border-right: 2px solid #217346; }
.sel td:nth-child(-n+10) { background: #c6c6c6; border-color: #a6a6a6; }
.sel td:nth-child(10) { border-right: 2px solid #217346; }
.sel td:nth-child(2), .sel td:nth-child(6), .sel td:nth-child(8), .sel td:nth-child(9), .sel td:nth-child(10) { text-align: right; }
.sel td.current:nth-child(4) { background: #fff; }
.vscroll { width: 20px; display: flex; flex-direction: column; align-items: center; gap: 1px; padding: 2px 0 0; border-left: 1px solid #ababab; background: linear-gradient(90deg, #e6e6e6 3px, #dadada 3px, #dadada 16px, #e6e6e6 16px); }
.vscroll button, .hscroll button { width: 14px; height: 13px; background: #fff; border: 1px solid #b5b5b5; display: flex; align-items: center; justify-content: center; }
.vthumb { width: 14px; height: 17px; background: #fff; border: 1px solid #b5b5b5; }

/* Sheet tabs */
.sheettabs { display: flex; height: 27px; align-items: center; border-bottom: 1px solid #c6c6c6; padding-left: 14px; }
.nav { width: 27px; display: flex; justify-content: center; }
.stab { align-self: flex-start; margin-left: 26px; width: 76px; height: 23px; padding-top: 2px; background: #fff; border-bottom: 2px solid #217346; color: #217346; font-weight: 700; }
.add { margin-left: 31px; }
.hscroll { display: flex; flex: 0 1 478px; margin-right: 20px; }
.hthumb { flex: 1; background: #fff; border: 1px solid #b5b5b5; margin-left: 1px; }
.htrack { width: 31px; background: #dadada; }

/* Status bar */
.status { display: flex; height: 20px; align-items: center; background: #f1f1f1; padding: 0 9px 0 7px; }
.view { width: 35px; height: 20px; display: flex; align-items: center; justify-content: center; }
.view.on { background: #c8c8c8; }
.zoom { padding: 0 4px; }
.range { appearance: none; width: 94px; height: 14px; margin: 0; background: linear-gradient(#aaa, #aaa) center / 100% 1px no-repeat; }
.range::-webkit-slider-thumb { appearance: none; width: 4px; height: 11px; background: #555; }
.pct { width: 38px; text-align: right; }

/* Task bar */
.taskbar { display: flex; height: 37px; background: #000; color: #fff; }
.task { width: 46px; height: 37px; display: flex; align-items: center; justify-content: center; }
.task:first-child { width: 44px; }
.open { background: linear-gradient(#76a9dc, #76a9dc) center bottom / 37px 2px no-repeat; }
.open.current { background: #333 linear-gradient(#76a9dc, #76a9dc) center bottom / 100% 2px no-repeat; }
.tray { display: flex; align-items: center; gap: 8px; }
.tray button:first-child { margin-right: 13px; }
.clock { display: flex; flex-direction: column; justify-content: center; text-align: center; line-height: 17px; width: 74px; }
.notif { display: flex; align-items: center; justify-content: center; width: 42px; margin-right: 3px; padding-right: 14px; border-right: 1px solid #555; }

/* Sort dialog, floating above the sheet */
.dialog { position: absolute; left: 263px; top: 198px; width: 566px; background: #f0f0f0; border: 1px solid #2e7fc2; box-shadow: 0 1px 6px rgba(0, 0, 0, .4); color: #111; }
.dlg-title { display: flex; align-items: center; height: 28px; padding: 0 16px 2px 7px; background: #fff; }
.dlg-title .help { font-size: 13px; margin-right: 34px; font-weight: 600; }
.dlg-tools { display: flex; align-items: center; gap: 4px; padding: 7px 6px 5px; height: 34px; }
.btn { height: 22px; background: #e1e1e1; border: 1px solid #adadad; display: flex; align-items: center; justify-content: center; gap: 2px; }
.w-add { width: 95px; } .w-del { width: 90px; gap: 4px; } .w-copy { width: 92px; } .w-alt { width: 71px; }
.arrow { width: 23px; background: #ccc; border-color: #c4c4c4; }
.bar { width: 2px; height: 23px; background: #555; margin: 0 -2px; }
.check { display: flex; align-items: center; gap: 5px; margin-left: auto; white-space: nowrap; }
.check input { appearance: none; width: 13px; height: 13px; margin: 0; background: #fff; border: 1px solid #333; display: grid; place-items: center; }
.check input:checked::after { content: ""; width: 9px; height: 5px; border: solid #222; border-width: 0 0 1px 1px; transform: translateY(-1px) rotate(-45deg); }
.levels { margin: 0 5px; height: 156px; background: #fff; border: 1px solid #828790; }
.lv { display: grid; }
.lv.head { grid-template-columns: 196px 168px 1fr; height: 19px; line-height: 19px; }
.lv.head span { padding-left: 4px; border-right: 1px solid #e5e5e5; }
.lv.row { grid-template-columns: 69px 114px 11px 158px 11px 1fr; background: #e5e5ea; height: 21px; padding: 0 3px; }
.lv.row .pick:nth-child(3) { grid-column: 4; }
.lv.row .pick:nth-child(4) { grid-column: 6; }
.pick { position: relative; display: block; }
.pick select { appearance: none; width: 100%; height: 20px; border: 1px solid #b5b5b5; border-radius: 0; background: #fff; padding: 0 2px; }
.pick svg { position: absolute; right: 2px; top: 3px; width: 15px; height: 15px; }
.dlg-foot { display: flex; justify-content: flex-end; gap: 10px; padding: 4px 6px 7px; }
.dlg-foot .btn { width: 69px; height: 20px; padding-bottom: 2px; }
.dlg-foot .ok { border: 2px solid #1874c4; }
.grip { position: absolute; right: 1px; bottom: 1px; }
.pointer { position: absolute; left: 421px; top: 201px; }

/* Recording watermark */
.mark { position: absolute; left: 16px; bottom: 11px; color: #fff; font-weight: 700; font-family: Lato, sans-serif; pointer-events: none; }
.mark-a { font-size: 11px; line-height: 11px; text-shadow: 0 0 2px #222, 1px 1px 2px #222, -1px -1px 2px #222; }
.mark-b { display: flex; align-items: center; gap: 3px; font-size: 17px; height: 32px; }
```
